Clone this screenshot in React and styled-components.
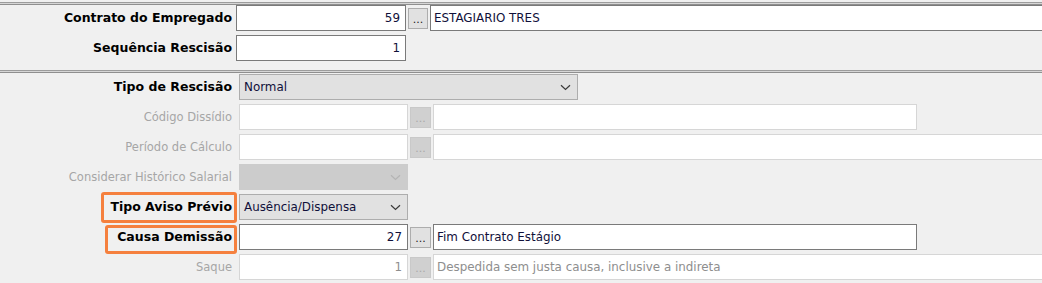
import React from 'react';
import styled, { createGlobalStyle } from 'styled-components';

const Global = createGlobalStyle`
  html, body { margin: 0; padding: 0; background: #f0f0f0; }
  body { font-family: "DejaVu Sans", Verdana, sans-serif; overflow: hidden; }
`;

const Page = styled.div`
  width: 1042px;
  height: 283px;
  box-sizing: border-box;
  padding-top: 2px;
  background: #f0f0f0;
  overflow: hidden;
`;

const Divider = styled.div`
  height: 3px;
  background: linear-gradient(#9c9c9c 0 1px, #d6d6d6 1px 2px, #8f8f8f 2px 3px);
`;

const Section = styled.div`
  display: flex;
  flex-direction: column;
  gap: 4px;
  padding: ${(p) => p.$pad};
`;

const Row = styled.div`
  display: flex;
  align-items: center;
  height: 26px;
`;

const Label = styled.label`
  position: relative;
  flex: none;
  width: 232px;
  height: 26px;
  line-height: 26px;
  text-align: right;
  white-space: nowrap;
  font-size: ${(p) => (p.$off ? '11.5px' : '12.5px')};
  font-weight: ${(p) => (p.$off ? 400 : 700)};
  color: ${(p) => (p.$off ? '#a6a6a6' : '#000')};
  margin-right: ${(p) => p.$gap}px;
`;

const Mark = styled.span`
  position: absolute;
  left: ${(p) => p.$l}px;
  right: -5px;
  top: ${(p) => p.$t}px;
  bottom: ${(p) => p.$b}px;
  border: 3px solid #f5803e;
  border-radius: 3px;
  pointer-events: none;
`;

const Edit = styled.div`
  box-sizing: border-box;
  flex: ${(p) => (p.$grow ? '1 0 auto' : 'none')};
  width: ${(p) => (p.$w ? `${p.$w}px` : 'auto')};
  margin-right: ${(p) => (p.$grow ? '-4px' : '0')};
  height: 26px;
  display: flex;
  align-items: center;
  justify-content: ${(p) => (p.$num ? 'flex-end' : 'flex-start')};
  padding: 0 5px 0 3px;
  background: #fff;
  border: 1px solid ${(p) => (p.$off ? '#d6d6d6' : '#7a7a7a')};
  font-size: 11.9px;
  color: ${(p) => (p.$off ? '#8e8e8e' : '#10103a')};
  white-space: nowrap;
  overflow: hidden;
`;

const Dots = styled.div`
  box-sizing: border-box;
  flex: none;
  width: ${(p) => p.$w}px;
  height: 21px;
  margin: 0 2px;
  display: flex;
  align-items: flex-end;
  justify-content: center;
  padding-bottom: 3px;
  background: ${(p) => (p.$off ? '#d0d0d0' : '#e1e1e1')};
  border: 1px solid ${(p) => (p.$off ? '#c9c9c9' : '#adadad')};
  font-size: 11px;
  line-height: 1;
  color: ${(p) => (p.$off ? '#a9a9a9' : '#222')};
`;

const Select = styled.div`
  box-sizing: border-box;
  flex: none;
  width: ${(p) => p.$w}px;
  height: 26px;
  display: flex;
  align-items: center;
  justify-content: space-between;
  padding: 0 6px 0 4px;
  background: ${(p) => (p.$off ? '#cccccc' : '#e1e1e1')};
  border: 1px solid ${(p) => (p.$off ? '#cccccc' : '#adadad')};
  font-size: 11.9px;
  color: #10103a;
  white-space: nowrap;
`;

const Chevron = ({ off }) => (
  <svg width="11" height="7" viewBox="0 0 11 7">
    <path d="M1 1.2 L5.5 5.5 L10 1.2" fill="none" stroke={off ? '#b4b4b4' : '#3a3a3a'} strokeWidth="1.2" />
  </svg>
);

export default function App() {
  return (
    <Page>
      <Global />
      <Divider />
      <Section $pad="0 0 9px 0">
        <Row>
          <Label $gap={4}>Contrato do Empregado</Label>
          <Edit $w={170} $num>59</Edit>
          <Dots $w={20}>...</Dots>
          <Edit $grow>ESTAGIARIO TRES</Edit>
        </Row>
        <Row>
          <Label $gap={4}>Sequência Rescisão</Label>
          <Edit $w={170} $num>1</Edit>
        </Row>
      </Section>
      <Divider />
      <Section $pad="1px 0 0 0">
        <Row>
          <Label $gap={7}>Tipo de Rescisão</Label>
          <Select $w={339}>
            <span>Normal</span>
            <Chevron />
          </Select>
        </Row>
        <Row>
          <Label $gap={7} $off>Código Dissídio</Label>
          <Edit $w={169} $off $num />
          <Dots $w={21} $off>...</Dots>
          <Edit $w={484} $off />
        </Row>
        <Row>
          <Label $gap={7} $off>Período de Cálculo</Label>
          <Edit $w={169} $off $num />
          <Dots $w={21} $off>...</Dots>
          <Edit $grow $off />
        </Row>
        <Row>
          <Label $gap={7} $off>Considerar Histórico Salarial</Label>
          <Select $w={169} $off>
            <span />
            <Chevron off />
          </Select>
        </Row>
        <Row>
          <Label $gap={7}>
            Tipo Aviso Prévio
            <Mark $l={101} $t={-2} $b={-3} />
          </Label>
          <Select $w={169}>
            <span>Ausência/Dispensa</span>
            <Chevron />
          </Select>
        </Row>
        <Row>
          <Label $gap={7}>
            Causa Demissão
            <Mark $l={105} $t={1} $b={-4} />
          </Label>
          <Edit $w={169} $num>27</Edit>
          <Dots $w={21}>...</Dots>
          <Edit $w={484}>Fim Contrato Estágio</Edit>
        </Row>
        <Row>
          <Label $gap={7} $off>Saque</Label>
          <Edit $w={169} $off $num>1</Edit>
          <Dots $w={21} $off>...</Dots>
          <Edit $grow $off>Despedida sem justa causa, inclusive a indireta</Edit>
        </Row>
      </Section>
    </Page>
  );
}
